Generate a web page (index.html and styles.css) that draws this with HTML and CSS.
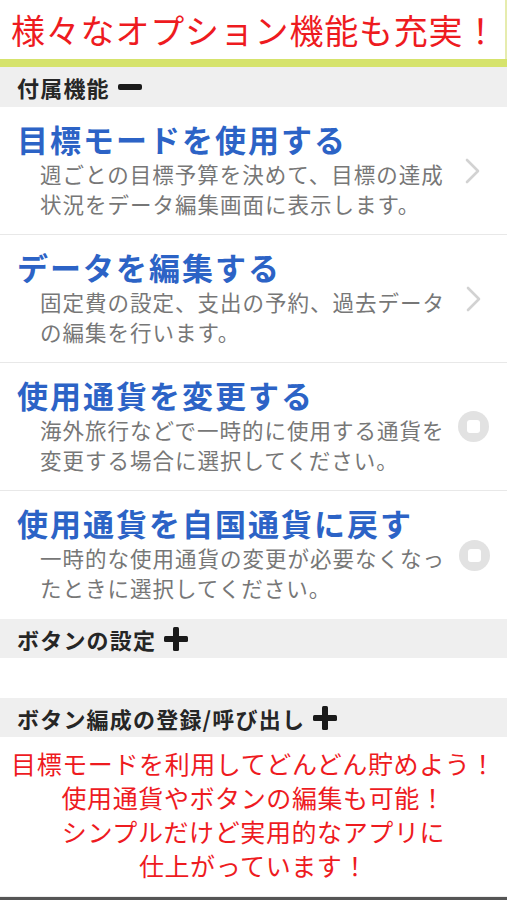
FILE: index.html
```html
<!DOCTYPE html>
<html lang="ja">
<head>
<meta charset="utf-8">
<link rel="stylesheet" href="styles.css">
</head>
<body>
<div class="page">
  <header class="top">
    <h1 class="top-title">様々なオプション機能も充実！</h1>
  </header>
  <div class="accent"></div>

  <div class="section-head section-first">
    <span>付属機能</span>
    <svg class="sh-icon" width="26" height="26" viewBox="0 0 26 26"><rect x="1" y="10" width="24" height="6" rx="2" fill="#1a1a1a"/></svg>
  </div>

  <div class="row">
    <div class="row-body">
      <div class="row-title">目標モードを使用する</div>
      <div class="row-desc">週ごとの目標予算を決めて、目標の達成<br>状況をデータ編集画面に表示します。</div>
    </div>
    <div class="row-icon">
      <svg width="16" height="26" viewBox="0 0 16 26"><path d="M2 2 L13 13 L2 24" fill="none" stroke="#d2d2d2" stroke-width="2.6" stroke-linecap="round" stroke-linejoin="round"/></svg>
    </div>
  </div>

  <div class="row">
    <div class="row-body">
      <div class="row-title">データを編集する</div>
      <div class="row-desc">固定費の設定、支出の予約、過去データ<br>の編集を行います。</div>
    </div>
    <div class="row-icon">
      <svg width="16" height="26" viewBox="0 0 16 26"><path d="M2 2 L13 13 L2 24" fill="none" stroke="#d2d2d2" stroke-width="2.6" stroke-linecap="round" stroke-linejoin="round"/></svg>
    </div>
  </div>

  <div class="row">
    <div class="row-body">
      <div class="row-title">使用通貨を変更する</div>
      <div class="row-desc">海外旅行などで一時的に使用する通貨を<br>変更する場合に選択してください。</div>
    </div>
    <div class="row-icon">
      <span class="check"><span class="check-in"></span></span>
    </div>
  </div>

  <div class="row row-last">
    <div class="row-body">
      <div class="row-title">使用通貨を自国通貨に戻す</div>
      <div class="row-desc">一時的な使用通貨の変更が必要なくなっ<br>たときに選択してください。</div>
    </div>
    <div class="row-icon">
      <span class="check"><span class="check-in"></span></span>
    </div>
  </div>

  <div class="section-head">
    <span>ボタンの設定</span>
    <svg class="sh-icon" width="26" height="26" viewBox="0 0 26 26"><rect x="1" y="10" width="24" height="6" rx="1.5" fill="#1a1a1a"/><rect x="10" y="1" width="6" height="24" rx="1.5" fill="#1a1a1a"/></svg>
  </div>
  <div class="spacer"></div>
  <div class="section-head">
    <span>ボタン編成の登録/呼び出し</span>
    <svg class="sh-icon" width="26" height="26" viewBox="0 0 26 26"><rect x="1" y="10" width="24" height="6" rx="1.5" fill="#1a1a1a"/><rect x="10" y="1" width="6" height="24" rx="1.5" fill="#1a1a1a"/></svg>
  </div>

  <div class="promo">
    目標モードを利用してどんどん貯めよう！<br>
    使用通貨やボタンの編集も可能！<br>
    シンプルだけど実用的なアプリに<br>
    仕上がっています！
  </div>
  <div class="bottom-bar"></div>
</div>
</body>
</html>
```

FILE: styles.css
```css
html, body {
  margin: 0;
  padding: 0;
  background: #ffffff;
}
body {
  font-family: "Noto Sans CJK JP", "Noto Sans", sans-serif;
}
.page {
  width: 507px;
  height: 900px;
  display: flex;
  flex-direction: column;
  overflow: hidden;
}
.top {
  height: 59px;
  display: flex;
  align-items: center;
  padding-left: 11px;
  box-sizing: border-box;
  border-right: 2px solid #e6ecae;
  flex-shrink: 0;
}
.top-title {
  margin: 0;
  font-size: 34px;
  font-weight: 400;
  color: #ee1b1f;
  line-height: 40px;
  letter-spacing: 0.8px;
}
.accent {
  height: 8px;
  background: #d6e36c;
  flex-shrink: 0;
}
.section-head {
  height: 39px;
  background: #efefef;
  display: flex;
  align-items: center;
  gap: 7px;
  padding-left: 17px;
  font-size: 22px;
  font-weight: 700;
  color: #262626;
  letter-spacing: 1.2px;
  flex-shrink: 0;
}
.section-first {
  height: 40px;
}
.sh-icon {
  display: block;
}
.row {
  height: 128px;
  box-sizing: border-box;
  border-bottom: 1px solid #e8e8e8;
  display: flex;
  align-items: center;
  flex-shrink: 0;
}
.row-last {
  border-bottom: none;
}
.row-body {
  flex: 1;
  padding-top: 12px;
  padding-bottom: 15px;
  align-self: flex-start;
}
.row-title {
  padding-left: 17px;
  font-size: 31px;
  line-height: 40px;
  font-weight: 700;
  color: #2c63c6;
  letter-spacing: 2px;
  white-space: nowrap;
}
.row-desc {
  padding-left: 40px;
  font-size: 21.5px;
  line-height: 29.5px;
  color: #777777;
  letter-spacing: 1px;
  white-space: nowrap;
}
.row-icon {
  width: 62px;
  display: flex;
  justify-content: center;
  align-items: center;
  padding-right: 4px;
}
.check {
  width: 31px;
  height: 31px;
  border-radius: 50%;
  background: #e2e2e2;
  display: flex;
  align-items: center;
  justify-content: center;
}
.check-in {
  width: 13px;
  height: 13px;
  border-radius: 3px;
  background: #ffffff;
}
.spacer {
  height: 40px;
  flex-shrink: 0;
}
.promo {
  flex: 1;
  text-align: center;
  color: #ee1b1f;
  font-size: 25px;
  line-height: 34px;
  padding-top: 9px;
  letter-spacing: 0.6px;
}
.bottom-bar {
  height: 3px;
  background: #555555;
  border-top: 1px solid #eeeeee;
  flex-shrink: 0;
}
```
